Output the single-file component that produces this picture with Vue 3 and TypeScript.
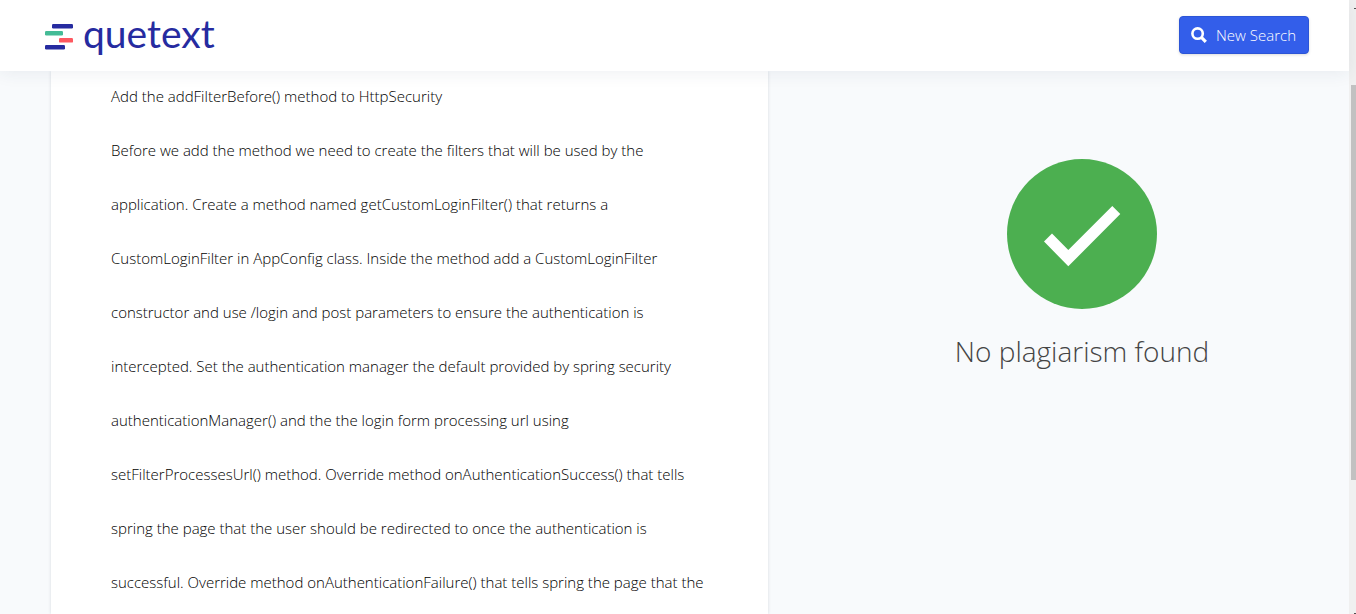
<script setup lang="ts">
const lines: string[] = [
  'Add the addFilterBefore() method to HttpSecurity',
  'Before we add the method we need to create the filters that will be used by the',
  'application. Create a method named getCustomLoginFilter() that returns a',
  'CustomLoginFilter in AppConfig class. Inside the method add a CustomLoginFilter',
  'constructor and use /login and post parameters to ensure the authentication is',
  'intercepted. Set the authentication manager the default provided by spring security',
  'authenticationManager() and the the login form processing url using',
  'setFilterProcessesUrl() method. Override method onAuthenticationSuccess() that tells',
  'spring the page that the user should be redirected to once the authentication is',
  'successful. Override method onAuthenticationFailure() that tells spring the page that the',
]
</script>

<template>
  <div class="window">
    <div class="page">
      <header class="topbar">
        <a class="brand" href="#" aria-label="quetext">
          <svg class="mark" width="28" height="26" viewBox="0 0 28 26" aria-hidden="true">
            <rect x="7" y="0" width="21" height="4.4" rx="1.2" fill="#262ba0" />
            <rect x="0" y="7" width="18" height="4.4" rx="1.2" fill="#44bb96" />
            <rect x="14" y="14" width="14" height="4.6" rx="1.2" fill="#fe5860" />
            <rect x="0" y="21" width="20" height="4.4" rx="1.2" fill="#262ba0" />
          </svg>
          <span class="name">quetext</span>
        </a>
        <button class="search" type="button">
          <svg width="16" height="16" viewBox="0 0 16 16" fill="none" stroke="#fff" aria-hidden="true">
            <circle cx="6.6" cy="6.6" r="5.2" stroke-width="2.6" />
            <path d="M10.4 10.4L14.8 14.8" stroke-width="3.2" />
          </svg>
          <span>New Search</span>
        </button>
      </header>
      <main class="content">
        <article class="card">
          <p class="text"><span v-for="line in lines" :key="line" class="line">{{ line }}</span></p>
        </article>
        <section class="result">
          <svg class="check" width="150" height="150" viewBox="0 0 150 150" aria-hidden="true">
            <circle cx="75" cy="75" r="75" fill="#4caf50" />
            <path d="M37 82.5L45 74.5L61.3 91L105.3 47L113.3 55L61.3 107.3Z" fill="#fff" />
          </svg>
          <h1 class="verdict">No plagiarism found</h1>
        </section>
      </main>
    </div>
    <div class="track" aria-hidden="true">
      <i class="arrow"></i>
      <div class="thumb"></div>
      <i class="arrow"></i>
    </div>
  </div>
</template>

<style>
body {
  margin: 0;
}
</style>

<style scoped>
.window {
  display: flex;
  height: 100vh;
  overflow: hidden;
  background: #f8fafc;
  font-family: "Segoe UI", "Open Sans", "Noto Sans", sans-serif;
  font-weight: 300;
}
.page {
  flex: 1;
  min-width: 0;
  display: flex;
  flex-direction: column;
}
.topbar {
  position: relative;
  z-index: 1;
  flex: none;
  box-sizing: border-box;
  height: 71px;
  padding: 0 40px 2px 45px;
  display: flex;
  align-items: center;
  justify-content: space-between;
  background: #fff;
  box-shadow: 0 2px 16px rgba(40, 70, 90, 0.08);
}
.brand {
  display: flex;
  align-items: center;
  gap: 10px;
  color: #262ba0;
  text-decoration: none;
}
.mark {
  margin-top: 4px;
}
.name {
  font-family: Lato, sans-serif;
  font-weight: 400;
  font-size: 39px;
  line-height: 48px;
  margin-top: -4px;
}
.search {
  display: flex;
  align-items: center;
  gap: 9px;
  height: 38px;
  padding: 0 12px 0 11px;
  border: 1px solid #2c55d6;
  border-radius: 4px;
  background: #335eea;
  color: #fff;
  font-family: inherit;
  font-weight: 300;
  font-size: 15px;
  white-space: nowrap;
  box-shadow: 0 1px 3px rgba(0, 0, 0, 0.14);
}
.content {
  flex: 1;
  min-height: 0;
  display: grid;
  grid-template-columns: 717fr 432fr;
  gap: 98px;
  padding: 0 51px;
}
.card {
  min-width: 0;
  padding: 0 60px;
  background: #fff;
  box-shadow: 0 0 3px rgba(40, 60, 80, 0.16);
}
.text {
  margin: -2px 0 0;
  color: #000;
  font-size: 15px;
  line-height: 54px;
}
.line {
  display: block;
  white-space: nowrap;
}
.result {
  display: flex;
  flex-direction: column;
  align-items: center;
  padding-top: 88px;
}
.verdict {
  margin: 20px 0 0;
  color: #444;
  font-weight: 300;
  font-size: 28px;
  line-height: 44px;
  white-space: nowrap;
}
.track {
  flex: none;
  width: 5px;
  padding-left: 2px;
  display: flex;
  flex-direction: column;
  align-items: flex-end;
  background: #f0f0f0;
}
.arrow {
  width: 2px;
  height: 1px;
  margin-top: 8px;
  background: #505050;
}
.thumb {
  width: 5px;
  height: 395px;
  margin-top: 76px;
  margin-bottom: auto;
  background: #c1c1c1;
}
</style>
